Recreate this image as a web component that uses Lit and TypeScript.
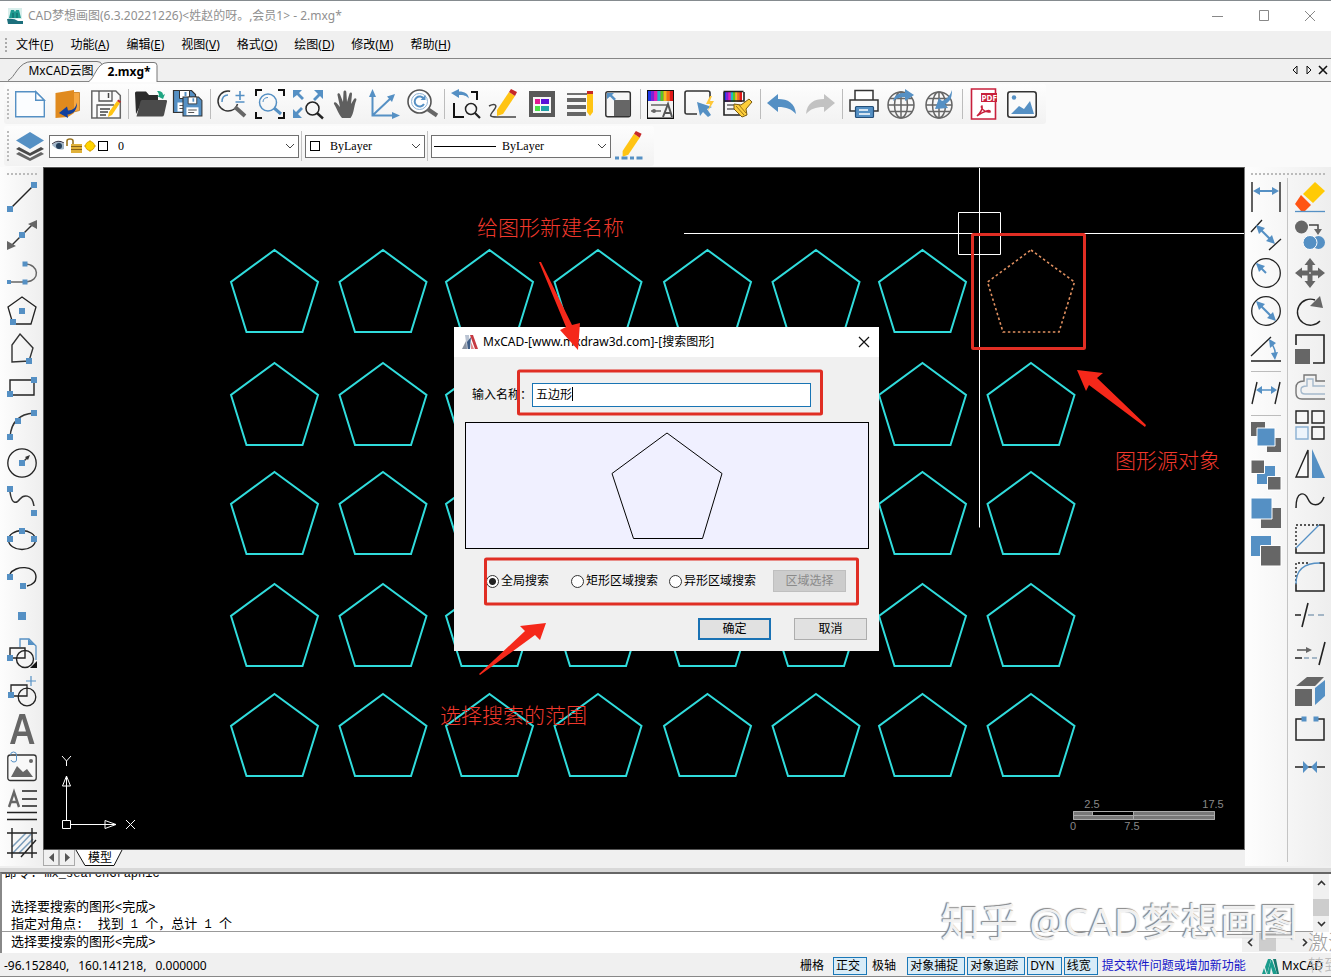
import { LitElement, html, svg, css } from "lit";
import type { SVGTemplateResult, TemplateResult } from "lit";
import { customElement, property } from "lit/decorators.js";

const B = "#5590c4";
const G = "#666666";

const node = (x: number, y: number, s = 6) =>
  svg`<rect x=${x - s / 2} y=${y - s / 2} width=${s} height=${s} fill=${B} />`;

const pencil = svg`<path d="M8 21 20 3l6 4L14 25l-6 2z" fill="#ffc414"/><path d="M20 3l2-3 6 3-2 4z" fill="#c62828"/>`;
const rainbow = (x: number, y: number, w: number) => svg`
  <rect x=${x} y=${y} width=${w} height="10" fill="#d11fc0"/>
  ${["#2038e8", "#7a22d8", "#e020b8", "#20b8c8", "#58c820", "#f0c018", "#f07010", "#e01818"].map(
    (c, i) => svg`<rect x=${x + (i * w) / 8} y=${y} width=${w / 8} height="10" fill=${c} />`
  )}`;
const globe = svg`<g fill="none" stroke="#666" stroke-width="1.500"><circle cx="14" cy="16" r="13"/><ellipse cx="14" cy="16" rx="6.500" ry="13"/><path d="M14 3v26M1 16h26M3 9.500h22M3 22.500h22"/></g>`;
const floppy = (x: number, y: number, s: number) => svg`
  <g transform="translate(${x} ${y}) scale(${s})">
    <path d="M0 0h18l4 4v18H0z" fill=${B} stroke="#333" stroke-width="1.200"/>
    <path d="M6 0h10v8H6z" fill="#fff" stroke="#333"/><path d="M12 1.500v4" stroke=${B} stroke-width="2"/>
    <path d="M4 12h14v9H4z" fill="#fff"/><path d="M6 15h10M6 18h7" stroke="#555" stroke-width="1.200"/>
  </g>`;

const ICONS: Record<string, SVGTemplateResult> = {
  newFile: svg`<path d="M.7 2.700h20l8.600 8.600v16.500H.7z" fill="#fbfdff" stroke=${B} stroke-width="1.400"/><path d="M20.700 2.700v8.600h8.600z" fill="#fff" stroke=${B} stroke-width="1.400"/>`,
  door: svg`<path d="M17 3.500h9.500v18L17 24z" fill="#f6a843" stroke="#c47a1c" stroke-width=".8"/><path d="M2.500 4 21 1v23l-6 4-12.500 1z" fill="#e08a1e"/><path d="M24 13.500c-1 5-4 8-9 8l-1-4-8 6.500 9 5-.5-3.500c6 0 10-5 9.500-12z" fill="#123f9c"/>`,
  save: svg`<path d="M.8 2h24l4.500 4.500V29H.8z" fill="#fbfbfb" stroke="#666" stroke-width="1.500"/><path d="M8 2v10h13V2M6 29V16h17" fill="none" stroke="#555" stroke-width="1.300"/><path d="M17.500 4v5" stroke="#444" stroke-width="1.500"/><path d="M9 20h10M9 23h8M9 26h6" stroke="#444" stroke-width="1.300"/><path d="m18 23 8-11 3 2-8 12-4 2z" fill="#ffc414"/><path d="m26 12 1.500-1.500 2.500 2L29 14z" fill="#c62828"/>`,
  open: svg`<path d="M0 4q0-1.500 1.500-1.500H11L14 6h9v5H8L1 25z" fill="#2b2b2b"/><path d="M7 11h24q1.500 0 1 1.500L29 26q-.5 1.500-2 1.500H1.500L5.500 12.500Q6 11 7 11z" fill="#4b4b4b"/><path d="M22 2c5 0 6 2 6 4l2-1-2 5-6-3 2-.5c0-2-1-3-2-4.500z" fill="#1fa582"/>`,
  saveAll: svg`${floppy(0.5, 1.5, 1)}${floppy(10, 8, 0.86)}`,
  zoomPm: svg`<circle cx="11" cy="12" r="10" fill="none" stroke="#333" stroke-width="1.500" stroke-dasharray="46 17" stroke-dashoffset="-3"/><path d="M5 13c0-4 2-7 6-7" fill="none" stroke=${B} stroke-width="1.500"/><path d="M18 18 28 27" stroke=${G} stroke-width="4"/><path d="M23 2v9M18.500 6.500h9M18.500 13h9" stroke=${B} stroke-width="1.600"/>`,
  zoomWin: svg`<path d="M1 7V1h6M23 1h6v6M29 23v6h-6M7 29H1v-6" fill="none" stroke="#111" stroke-width="2"/><circle cx="13" cy="13.500" r="8.500" fill="none" stroke=${B} stroke-width="1.500"/><path d="M8 13c0-3 2-4.500 5-4.500" fill="none" stroke=${B}/><path d="m19 19 7 6" stroke=${B} stroke-width="3"/>`,
  zoomExt: svg`<path d="M0 1h9L6 4l5 5-2 2-5-5-4 3zM30 1v9l-3-3-5 5-2-2 5-5-4-4zM0 29v-9l3 3 5-5 2 2-5 5 4 4z" fill=${B}/><circle cx="19.500" cy="19.500" r="6.500" fill="none" stroke="#222" stroke-width="1.500"/><path d="m24 24 6 5.500" stroke="#222" stroke-width="2.400"/>`,
  hand: svg`<path d="M11 29C7 24 6 20 3 15c-.6-2 1.600-2.500 2.600-1L9 18 6.500 6c-.4-2 2-2.400 2.600-.6L12 13 12.500 3c.2-2 2.600-2 2.800 0L16 13l2.500-8.500c.6-1.700 2.800-1.200 2.500.6L20 15l3-5c1-1.700 3-.6 2.300 1.200C23 16 23 25 19.500 29z" fill="#5f5f5f"/>`,
  ucs: svg`<path d="M3.500 6v20.500H25M4 26 22 9" fill="none" stroke=${B} stroke-width="2"/><path d="M3.500 0 7 8H0zM31 26.500l-8 3.500v-7zM26 5l-3 8-5-5.500z" fill=${B}/>`,
  zoomPrev: svg`<circle cx="12.500" cy="12.500" r="11.500" fill="#fff" stroke="#555" stroke-width="1.600"/><circle cx="12.500" cy="12.500" r="8" fill="none" stroke="#8bb0d2" stroke-width="1"/><path d="M17 15a5 5 0 1 1 0-5" fill="none" stroke=${B} stroke-width="2"/><path d="M18.500 6v5h-5z" fill=${B}/><path d="m20.500 20 9.500 6.500" stroke=${G} stroke-width="4"/>`,
  undoWin: svg`<path d="M20 3h6v8M3 14v14h10" fill="none" stroke="#111" stroke-width="2"/><path d="M0 4 8 0v2.500c6 0 9 2 10 7-3-3-5-3.500-10-3.500V9z" fill=${B}/><circle cx="20" cy="20" r="5.500" fill="none" stroke="#222" stroke-width="1.500"/><path d="m24 24 5 5" stroke="#222" stroke-width="2.200"/>`,
  sketch: svg`<path d="M0 17c6-3 9-1 5 4s-6 7 3 7h19" fill="none" stroke="#444" stroke-width="1.500"/>${pencil}`,
  props: svg`<rect x="2" y="2" width="26" height="26" fill="#595959"/><rect x="6" y="8" width="18" height="16" fill="#f6f6f6"/><path fill="#e01890" d="M8 10h5v5H8z"/><path fill="#5a10d8" d="M14 10h8v5h-8z"/><path fill="#48e048" d="M8 17h5v5H8z"/><path fill="#20a0a8" d="M14 17h8v5h-8z"/>`,
  lines: svg`<path d="M2 5h20" stroke="#444" stroke-width="1.500"/><path d="M2 11h19M2 18h19M2 25h19" stroke=${G} stroke-width="4"/><path d="M22 5h6v18l-3 4-3-4z" fill="#ffc414"/><path d="M22 2h6v3h-6z" fill="#c62828"/>`,
  scale: svg`<rect x="2.800" y="2.800" width="24.500" height="25" rx="2" fill="#f6f6f6" stroke="#333" stroke-width="1.500"/><path d="M11 11h16v16H11z" fill=${G}/><path d="M4 4h7L9 6l4 4-2 1.500-4-4L4 10z" fill=${B}/>`,
  layerA: svg`<rect x="0" y="1" width="27" height="29" fill="#111"/>${rainbow(1, 2, 25)}<path d="M1 12h25v16.500H1z" fill="#f2f2f2"/><path d="M4 16h17M4 22h10" stroke=${G} stroke-width="1.600"/><circle cx="7" cy="22" r="2" fill=${G}/><path d="m16 28 5-13 4 13M18 24h5" fill="none" stroke="#555" stroke-width="2"/>`,
  quickSel: svg`<path d="M12 25H2q-2 0-2-2V4q0-2 2-2h21q2 0 2 2v5" fill="none" stroke="#333" stroke-width="1.600"/><path d="m12 13 15 5-5 2 4 6-3 2-5-5-3 4z" fill=${B}/><path d="m25 7-4 8h4l-2 7 6-10h-4l2-5z" fill="#ffc83a"/>`,
  match: svg`${rainbow(1, 3, 18)}<path d="M.5 2.500h20M1 3v23h17M1 12h20V3" fill="none" stroke="#222" stroke-width="1.600"/><path d="M4 16h9M4 20h8" stroke=${G} stroke-width="1.600"/><path d="m11 15 7 1 8-6 3 3-6 7 1 6-5 2-8-8z" fill="#ffcf3a" stroke="#7a5b10" stroke-width="1"/><path d="m13 17 8 9M16 16l7 8" stroke="#9a7318"/>`,
  undo: svg`<path d="M0 14 11 5v5c10 0 17 4 18 15-5-5-9-7-18-7v5z" fill=${B}/>`,
  redo: svg`<path d="M30 14 19 5v5C9 10 2 14 1 25c5-5 9-7 18-7v5z" fill="#c2c2c2"/>`,
  print: svg`<path d="M6 11V1.500h18V11" fill="#fff" stroke="#333" stroke-width="1.500"/><path d="M6 22H1V11h28v11h-5" fill="#f8f8f8" stroke="#333" stroke-width="1.500"/><rect x="6.500" y="17.500" width="18" height="11" rx="1" fill=${B} stroke="#234e78" stroke-width="1.200"/><path d="M10 21h9M10 25h11" stroke="#fff" stroke-width="1.300"/>`,
  globeUp: svg`${globe}<path d="M6 12c2-7 6-8 12-8V0l9 6-9 6V8c-5 0-8 1-12 4z" fill=${B}/>`,
  globeDown: svg`${globe}<path d="M27 1c0 8-2 12-7 14l3 4-13 1 4-11 3 3c5-2 8-5 10-11z" fill=${B}/>`,
  pdf: svg`<path d="M2.500 0h24v30h-24z" fill="#fff" stroke="#c8203c" stroke-width="1.600"/><path d="M12 4h16v9H12z" fill="#c8203c"/><text x="12.500" y="12" font-family="Open Sans, Liberation Sans, sans-serif" font-size="8" font-weight="700" fill="#fff">PDF</text><path d="M8 27c3-3 6-7 5-10-2 0 1 7 8 6 1-3-6-1-13 4z" fill="none" stroke="#c8203c" stroke-width="1.500"/>`,
  image: svg`<rect x=".8" y="2.800" width="28.400" height="25.500" rx="2.500" fill="#fafafa" stroke="#333" stroke-width="1.600"/><circle cx="7" cy="8.500" r="2.200" fill=${B}/><path d="m4 25 8-8 5 3 6-8 4 13z" fill=${B}/>`,
  layers: svg`<path d="m1 23 3-2 11 6 11-6 3 2-14 7z" fill=${G}/><path d="m1 18 3-2 11 6 11-6 3 2-14 7z" fill="#4a4a4a"/><path d="M15 1 29 9.500 15 18 1 9.500z" fill=${B}/>`,
  linetype: svg`<g transform="scale(.95)">${pencil}</g><path d="M0 27h30" stroke=${B} stroke-width="3" stroke-dasharray="4 2.500 6 2.500"/>`,

  line: svg`<path d="M3 27 27 3" stroke="#222" stroke-width="1.400"/>${node(3, 27)}${node(27, 3)}`,
  xline: svg`<path d="M3 27 27 3" stroke="#333" stroke-width="1.500"/><path d="M30 0v9l-9-5zM0 30v-9l9 5z" fill=${G}/>${node(15, 15)}`,
  pline: svg`<path d="M2 24h17c15-1 13-18-1-18" fill="none" stroke="#666" stroke-width="1.500"/>${node(2, 24, 4)}${node(18, 24, 5)}${node(18, 6, 5)}`,
  polygon: svg`<path d="m15 1 14 10-5 17H6L1 11z" fill="none" stroke="#222" stroke-width="1.300"/>${node(15, 15)}${node(6, 26)}`,
  polygon2: svg`<path d="m13 0 13 14-4 13-17 1V11z" fill="none" stroke="#333" stroke-width="1.400"/>${node(22, 27)}`,
  rect: svg`<path d="M3 8h24v15H3z" fill="none" stroke="#222" stroke-width="1.400"/>${node(27, 8)}${node(3, 22)}`,
  arc: svg`<path d="M3 27C4 14 11 4 27 3" fill="none" stroke="#333" stroke-width="1.500"/>${node(27, 3)}${node(11, 11)}${node(3, 27)}`,
  circle: svg`<circle cx="15" cy="15" r="14.200" fill="none" stroke="#222" stroke-width="1.300"/><path d="m15 15 6-6" stroke="#333" stroke-width="1.500"/><path d="m23 7-2 5-3-3z" fill="#333"/>${node(15, 15)}`,
  spline: svg`<path d="M3 6c2 14 7 11 10 7s12-6 14 7" fill="none" stroke="#333" stroke-width="1.500"/>${node(3, 3)}${node(27, 27)}`,
  ellipse: svg`<ellipse cx="15" cy="16" rx="13.500" ry="9.500" fill="none" stroke="#222" stroke-width="1.300"/>${node(15, 7)}${node(3, 15)}${node(27, 15)}`,
  ellArc: svg`<path d="M3 12C8 3 29 3 29 15c0 5-4 8-9 9" fill="none" stroke="#222" stroke-width="1.400"/>${node(3, 15)}${node(16, 24)}`,
  point: svg`${node(15, 16, 8)}`,
  insert: svg`<path d="M13 9V1h9l7 7v14" fill="none" stroke=${B} stroke-width="1.300"/><path d="M21 1v6h7z" fill=${B}/><path d="M3 10h15v10H3z" fill="none" stroke="#222" stroke-width="1.400"/><circle cx="18" cy="21" r="8.500" fill="none" stroke="#222" stroke-width="1.400"/>${node(3, 20)}<path d="M30 23v7h-7z" fill="#111"/>`,
  block: svg`<path d="M4 9h16v11H4z" fill="none" stroke="#222" stroke-width="1.300"/><circle cx="20" cy="21" r="8.800" fill="none" stroke="#222" stroke-width="1.300"/>${node(4, 19)}<path d="M24 0v10M19 5h10" stroke=${B} stroke-width="1.200"/>`,
  textA: svg`<path d="M3 30 12.500 0h5.500l9.500 30h-5l-2.300-8H10.200l-2.300 8zM11.400 17.500h7.600L15.200 5z" fill=${G}/>`,
  picture: svg`<rect x=".8" y="3" width="28.400" height="25.500" rx="2.500" fill="#f8f8f8" stroke="#333" stroke-width="1.300"/><circle cx="24" cy="9" r="2" fill=${G}/><path d="m4 25 6-11 6 6 4-3 6 8z" fill=${G}/><path d="M3.500 3q0-3 3-3t3 3v5q0 2-2.500 2T4 8" fill="none" stroke=${B}/>`,
  mtext: svg`<path d="M2 17 7 2l5 15M4 12h7" fill="none" stroke=${G} stroke-width="2.400"/><path d="M15 1h15M15 9h15M15 16h15M0 22.500h30M0 29.500h30" stroke="#222" stroke-width="1.400"/>`,
  hatch: svg`<path d="m5 19 14-14M6 25 24 6M12 25 26 11" stroke="#7a9cba" stroke-width="1.500"/><path d="M5 0v30M25 0v30M0 5h30M0 25h30M14 29 29 12" stroke="#222" stroke-width="1.400"/>`,

  dimH: svg`<path d="M1 0v30M29 0v30" stroke="#222" stroke-width="1.400"/><path d="M5 9h20" stroke=${B} stroke-width="2"/><path d="m2 9 7-4v8zM28 9l-7-4v8z" fill=${B}/>`,
  dimA: svg`<path d="M0 12 11 0M18 30l12-11" stroke="#222" stroke-width="1.300"/><path d="m7 7 15 15" stroke=${B} stroke-width="2"/><path d="m5 5 9 3-6 6zM24 24l-9-3 6-6z" fill=${B}/>`,
  dimR: svg`<circle cx="15" cy="15" r="14.300" fill="none" stroke="#222" stroke-width="1.300"/><path d="m6 6 9 9" stroke=${B} stroke-width="2"/><path d="m5 5 9 3-6 6z" fill=${B}/>`,
  dimD: svg`<circle cx="15" cy="15" r="14.300" fill="none" stroke="#222" stroke-width="1.300"/><path d="m7 7 16 16" stroke=${B} stroke-width="2"/><path d="m5 5 9 3-6 6zM25 25l-9-3 6-6z" fill=${B}/>`,
  dimAng: svg`<path d="M0 22 20 3M0 27h30" stroke="#222" stroke-width="1.300"/><path d="M20 9c4 5 5 9 4 14" fill="none" stroke=${B} stroke-width="1.500"/><path d="m18 5 7 4-6 5zM24 26l-4-7 7-1z" fill=${B}/>`,
  dimEdit: svg`<path d="M1 26 6 4M24 26l5-22" stroke="#222" stroke-width="1.400"/><path d="M7 12h17" stroke=${B} stroke-width="1.500"/><path d="m5 12 6-4v8zM26 12l-6-4v8z" fill=${B}/>`,
  ord1: svg`<path d="M0 0h14v14H0zM16 16h14v14H16z" fill="#666"/><path d="M6 6h18v18H6z" fill=${B} stroke="#fff"/>`,
  ord2: svg`<path d="M6 6h18v18H6z" fill=${B}/><path d="M0 0h13.500v13.500H0zM16.500 16.500H30V30H16.500z" fill="#666" stroke="#fff"/>`,
  ord3: svg`<path d="M10 10h20v20H10z" fill="#666"/><path d="M0 0h21v21H0z" fill=${B} stroke="#fff"/>`,
  ord4: svg`<path d="M0 0h20v20H0z" fill=${B}/><path d="M9.500 9.500H30V30H9.500z" fill="#666" stroke="#fff"/>`,
  erase: svg`<path d="M20 0 30 9 18 21 8 12z" fill="#ffca05"/><path d="m6 13 10 10-6 6H6l-6-7z" fill="#ff5414"/><path d="M0 29.500h30" stroke=${B} stroke-width="1.300"/>`,
  copy: svg`<circle cx="6.500" cy="7" r="6.500" fill=${G}/><path d="M14 5h9v6" fill="none" stroke="#444" stroke-width="1.500"/><path d="M19 9h8l-4 6z" fill=${G}/><circle cx="23.500" cy="22.500" r="6.500" fill=${B}/><circle cx="15" cy="22.500" r="7" fill=${B} stroke="#fff"/>`,
  move: svg`<path d="m15 0 5.500 7H17.500v5.500H23v-3l7 5.500-7 5.500v-3h-5.500V23h3L15 30l-5.500-7h3v-5.500H7v3L0 15l7-5.500v3h5.500V7h-3z" fill=${G}/><path d="M14 14h2v2h-2z" fill="#bbb"/>`,
  rotate: svg`<path d="M20 4A13 13 0 1 0 25 25" fill="none" stroke="#222" stroke-width="1.400"/><path d="m25 0 3 12-13-2z" fill=${G}/>`,
  scaleR: svg`<path d="M1 11V1h28v28h-11" fill="none" stroke="#222" stroke-width="1.600"/><path d="M0 15h15v15H0z" fill=${G}/>`,
  offset: svg`<path d="M30 9H21V3H9v6Q1 9 1 16v5q0 6 6 6h23" fill="none" stroke="#777" stroke-width="1.400"/><path d="M30 14H18V7h-6v7q-6 0-6 3.500v1q0 3.500 4 3.500h20" fill="none" stroke="#a5b9cc" stroke-width="1.400"/>`,
  array: svg`<path d="M1 1h12v12H1zM17 1h12v12H17zM17 17h12v12H17z" fill="#f6f6f6" stroke="#222" stroke-width="1.400"/><path d="M1 17h12v12H1z" fill="#edf4fb" stroke="#8ab0d2" stroke-width="1.400"/>`,
  mirror: svg`<path d="M13 2v27H1z" fill="#fafafa" stroke="#222" stroke-width="1.400"/><path d="M17 1v29h13z" fill=${B}/>`,
  wave: svg`<path d="M1 22C1 4 10 6 13 13s12 9 16-2" fill="none" stroke="#222" stroke-width="1.500"/>`,
  chamfer: svg`<path d="M24 1h5v28H1v-4" fill="none" stroke="#222" stroke-width="1.600"/><path d="M1 25V1h24" fill="none" stroke="#222" stroke-width="1.400" stroke-dasharray="2 2"/><path d="M1 24 24 1" stroke=${B} stroke-width="1.300"/>`,
  fillet: svg`<path d="M24 1h5v28H1v-6" fill="none" stroke="#222" stroke-width="1.600"/><path d="M1 23V1h14" fill="none" stroke="#222" stroke-width="1.400" stroke-dasharray="2 2"/><path d="M1 22C1 8 9 1 25 1" fill="none" stroke=${B} stroke-width="1.300"/>`,
  trim: svg`<path d="M0 15h6M7 27l6-24" stroke="#222" stroke-width="1.600"/><path d="M13 15h17" stroke="#8aa2b8" stroke-width="1.500" stroke-dasharray="6 4"/>`,
  extend: svg`<path d="M0 20h7M24 27l6-23" stroke="#222" stroke-width="1.600"/><path d="M9 20h13" stroke="#8aa2b8" stroke-width="1.500" stroke-dasharray="5 3"/><path d="M2 12h10" stroke="#555" stroke-width="1.500"/><path d="M11 9v6l6-3z" fill=${G}/>`,
  cube: svg`<path d="M0 13h17v17H0zM1 10 12 1h17l-9 9z" fill=${G}/><path d="m20 12 10-8v16L20 29z" fill=${B}/>`,
  brk: svg`<path d="M8 5H1v21h28V5h-8" fill="none" stroke="#222" stroke-width="1.500"/>${node(9, 5, 5)}${node(21, 5, 5)}`,
  join: svg`<path d="M0 15h30" stroke="#222" stroke-width="1.500"/><path d="M8 9v12l6-6zM22 9v12l-6-6z" fill=${B}/>`,
};

type Item = [string, string] | "|";

const MAIN: Item[] = [
  ["newFile", "新建"], ["door", "打开"], ["save", "保存"], "|",
  ["open", "打开文件"], ["saveAll", "另存为"], "|",
  ["zoomPm", "缩放"], ["zoomWin", "窗口缩放"], ["zoomExt", "范围缩放"], ["hand", "平移"], ["ucs", "坐标系"], ["zoomPrev", "重生成"], "|",
  ["undoWin", "上一视图"], ["sketch", "徒手画"], ["props", "特性"], ["lines", "线宽"], ["scale", "比例"], "|",
  ["layerA", "文字样式"], ["quickSel", "快速选择"], ["match", "特性匹配"], "|",
  ["undo", "撤销"], ["redo", "重做"], "|",
  ["print", "打印"], ["globeUp", "上传"], ["globeDown", "下载"], "|",
  ["pdf", "输出 PDF"], ["image", "输出图片"],
];
const DRAW: Item[] = [
  ["line", "直线"], ["xline", "构造线"], ["pline", "多段线"], ["polygon", "正多边形"], ["polygon2", "多边形"], ["rect", "矩形"],
  ["arc", "圆弧"], ["circle", "圆"], ["spline", "样条曲线"], ["ellipse", "椭圆"], ["ellArc", "椭圆弧"], ["point", "点"],
  ["insert", "插入块"], ["block", "创建块"], ["textA", "文字"], ["picture", "图片"], ["mtext", "多行文字"], ["hatch", "填充"],
];
const DIMS: Item[] = [
  ["dimH", "线性标注"], ["dimA", "对齐标注"], ["dimR", "半径标注"], ["dimD", "直径标注"], ["dimAng", "角度标注"], "|",
  ["dimEdit", "编辑标注"], "|", ["ord1", "前置"], ["ord2", "后置"], ["ord3", "置于对象之上"], ["ord4", "置于对象之下"],
];
const EDIT: Item[] = [
  ["erase", "删除"], ["copy", "复制"], ["move", "移动"], ["rotate", "旋转"], ["scaleR", "缩放"], ["offset", "偏移"],
  ["array", "阵列"], ["mirror", "镜像"], ["wave", "样条编辑"], ["chamfer", "倒角"], ["fillet", "圆角"], ["trim", "修剪"],
  ["extend", "延伸"], ["cube", "分解"], ["brk", "打断"], ["join", "合并"],
];

const icon = (name: string) => html`<svg class="icon" viewBox="0 0 30 30" aria-hidden="true">${ICONS[name]}</svg>`;

const base = css`
  * { box-sizing: border-box; }
  button, input, select { font: inherit; color: inherit; margin: 0; }
  button { border: 0; background: none; padding: 0; }
  .icon { display: block; width: 30px; height: 30px; overflow: visible; }
`;

@customElement("tool-strip")
class ToolStrip extends LitElement {
  @property({ attribute: false }) items: Item[] = [];
  static styles = [base, css`
    :host { display: flex; flex-direction: var(--dir, column); }
    .tool { width: 38px; height: 38px; display: grid; place-items: center; flex: none; }
    .sep { flex: none; display: grid; place-items: center; }
    .sep::before { content: ""; background: #bcbcbc; }
    :host([row]) { --dir: row; }
    :host([row]) .sep { width: 6px; }
    :host([row]) .sep::before { width: 1px; height: 30px; }
    :host(:not([row])) .sep { height: 6px; }
    :host(:not([row])) .sep::before { width: 30px; height: 1px; }
  `];
  render() {
    return this.items.map((it) =>
      it === "|" ? html`<span class="sep"></span>`
        : html`<button class="tool" aria-label=${it[1]}>${icon(it[0])}</button>`);
  }
}

@customElement("search-dialog")
class SearchDialog extends LitElement {
  static styles = [base, css`
    :host { display: flex; flex-direction: column; background: #f0f0f0; color: #000; font-size: 12px; line-height: 18px; }
    .head { display: flex; align-items: center; gap: 5px; height: 30px; padding: 0 8px; background: #fff; }
    .head h2 { flex: 1; margin: 0; font-size: 12px; font-weight: 400; }
    .logo { width: 16px; height: 16px; }
    .close { width: 14px; height: 14px; }
    .close svg, .logo { display: block; }
    .body { display: flex; flex-direction: column; padding: 26px 10px 11px 11px; }
    .name { display: flex; align-items: center; padding-left: 7px; }
    .name label { width: 60px; white-space: nowrap; }
    .field { position: relative; }
    .name input { display: block; width: 279px; height: 24px; border: 1px solid #1874b4; background: #fff; padding: 0 3px 2px; outline: none; }
    .caret { position: absolute; left: 40px; top: 4px; width: 1px; height: 14px; background: #000; }
    .preview { margin-top: 15px; height: 127px; border: 1px solid #000; background: #f0f0ff; display: grid; place-items: center; }
    .scope { display: flex; align-items: center; margin: 21px 0 0; padding: 0 0 0 21px; border: 0; height: 22px; min-width: 0; }
    .scope label { display: flex; align-items: center; gap: 2px; white-space: nowrap; }
    .scope .first { width: 85px; }
    .scope .mid { width: 98px; }
    .scope .last { width: 104px; }
    input[type="radio"] { appearance: none; width: 13px; height: 13px; border: 1px solid #333; border-radius: 50%; background: #fff; flex: none; }
    input[type="radio"]:checked { background: radial-gradient(circle, #222 0 3px, #fff 4px); }
    .btn { width: 73px; height: 22px; border: 1px solid #adadad; background: #e1e1e1; line-height: 18px; }
    .btn.default { border: 2px solid #1a72b4; line-height: 16px; }
    .btn:disabled { background: #ccc; border-color: #bfbfbf; color: #8a8a8a; }
    .actions { display: flex; justify-content: flex-end; gap: 23px; margin-top: 26px; padding-right: 2px; }
  `];
  render() {
    return html`
      <div class="head">
        <svg class="logo" viewBox="0 0 16 16" aria-hidden="true"><path d="M0 15 4 7l2 8z" fill="#8a93a2"/><path d="M3 1h4l1 14H5z" fill="#b9c3d2"/><path d="M8 1h3l5 14h-3z" fill="#c63a42"/><path d="m5 8 4-5-1 12H6z" fill="#3d5c86"/><path d="m9 8 3 7H9z" fill="#e08a8c"/></svg>
        <h2>MxCAD-[www.mxdraw3d.com]-[搜索图形]</h2>
        <button class="close" aria-label="关闭"><svg viewBox="0 0 14 14"><path d="m2 2 10 10M12 2 2 12" stroke="#111" stroke-width="1.200"/></svg></button>
      </div>
      <div class="body">
        <div class="name"><label for="n">输入名称：</label><div class="field"><input id="n" type="text" value="五边形" /><span class="caret"></span></div></div>
        <div class="preview">
          <svg width="112" height="108" viewBox="0 0 112 108" role="img" aria-label="五边形"><path d="M56 1 111 41.500 91.500 106.500H22.500L1 41.500z" fill="none" stroke="#000"/></svg>
        </div>
        <fieldset class="scope" aria-label="搜索范围">
          <label class="first"><input type="radio" name="s" checked />全局搜索</label>
          <label class="mid"><input type="radio" name="s" />矩形区域搜索</label>
          <label class="last"><input type="radio" name="s" />异形区域搜索</label>
          <button class="btn" disabled>区域选择</button>
        </fieldset>
        <div class="actions"><button class="btn default">确定</button><button class="btn">取消</button></div>
      </div>`;
  }
}

const COLS = [274.5, 383, 489.5, 598, 707.5, 816, 922.5, 1031];
const ROWS = [250, 363, 472, 584, 694];
const penta = (x: number, y: number) =>
  `M${x} ${y}L${x + 43.5} ${y + 32}L${x + 28} ${y + 82}H${x - 28}L${x - 43.5} ${y + 32}Z`;

const MENUS = [["文件", "F"], ["功能", "A"], ["编辑", "E"], ["视图", "V"], ["格式", "O"], ["绘图", "D"], ["修改", "M"], ["帮助", "H"]];

const mixed = (s: string): TemplateResult[] =>
  s.split(/([\x20-\x7e]+)/).map((p) => (/^[\x20-\x7e]+$/.test(p) ? html`<span class="mono">${p}</span>` : html`${p}`));

@customElement("app-root")
class AppRoot extends LitElement {
  static styles = [base, css`
    :host {
      display: flex; flex-direction: column; min-height: 100vh; position: relative; overflow: hidden;
      background: #f0f0f0; color: #000; font-family: "Noto Sans", "Noto Sans CJK SC", sans-serif; font-size: 12px; line-height: 18px;
    }
    .title { display: flex; align-items: center; gap: 5px; height: 31px; padding: 0 13px 0 7px; background: #fff; border-top: 1px solid #858b8f; color: #909090; }
    .title h1 { flex: 1; margin: 0; font-size: 12px; font-weight: 400; }
    .title .app { width: 16px; height: 16px; }
    .wins { display: flex; gap: 30px; }
    .wins button { width: 16px; height: 16px; }
    .wins svg { display: block; fill: none; stroke: #888; }
    .menu { display: flex; align-items: center; gap: 17px; height: 28px; padding-left: 5px; border-bottom: 1px solid #868686; }
    .grip { flex: none; width: 2px; height: 14px; background: repeating-linear-gradient(#aaa 0 2px, transparent 2px 4px); margin-right: -8px; }
    .tabs { display: flex; height: 23px; position: relative; border-bottom: 1px solid #868686; align-items: flex-end; padding-left: 8px; }
    .tab { position: relative; height: 20px; width: 91px; padding-left: 15px; }
    .tab.on { width: 70px; margin: 0 0 -1px -11px; padding-left: 12px; font-weight: 700; }
    .tab svg { position: absolute; left: 0; top: 0; z-index: 0; }
    .tab span { position: relative; }
    .nav { margin-left: auto; display: flex; gap: 4px; padding: 0 3px 6px; }
    .nav button { width: 10px; height: 10px; }
    .nav svg { display: block; }
    .bars { background: #fafafa; height: 85px; padding: 2px 0 0 4px; display: flex; flex-direction: column; gap: 2px; align-items: flex-start; }
    .bar { display: flex; align-items: center; height: 40px; padding: 0 5px 0 3px; background: linear-gradient(#fdfdfd, #f2f2f2); border-radius: 3px; }
    .vgrip { width: 2px; height: 30px; margin-right: 2px; background: repeating-linear-gradient(#bbb 0 2px, transparent 2px 4px); }
    .lay { width: 38px; height: 34px; display: grid; place-items: center; }
    .combo { display: flex; align-items: center; position: relative; height: 23px; border: 1px solid #707070; background: #fff; padding-left: 4px; gap: 2px; font-family: "Liberation Serif", serif; }
    .combo select { appearance: none; border: 0; background: none; flex: 1; min-width: 0; height: 20px; padding: 0 20px 0 8px; outline: none; }
    .combo .chev { position: absolute; right: 3px; top: 7px; width: 10px; height: 7px; pointer-events: none; }
    .w1 { width: 250px; } .w2 { width: 120px; } .w3 { width: 180px; }
    .w1, .w3 { padding-left: 2px; }
    .w3 select { padding-left: 4px; }
    .box { width: 10px; height: 10px; border: 1px solid #000; background: #fff; }
    .dash { width: 62px; height: 1px; background: #000; }
    .gap { width: 1px; height: 30px; background: #c4c4c4; margin: 0 3px 0 2px; }
    .combo svg { flex: none; }
    .main { display: flex; flex: 1; min-height: 0; }
    .side { flex: none; background: linear-gradient(90deg, #fdfdfd, #eee); }
    .left { width: 43px; padding: 6px 0 0 3px; }
    .right { width: 86px; padding: 6px 2px 0; display: flex; flex-wrap: wrap; align-content: flex-start; }
    .hgrip { height: 2px; width: 30px; margin: 0 4px 3px; background: repeating-linear-gradient(90deg, #bbb 0 2px, transparent 2px 4px); }
    .right .hgrip { width: 74px; }
    .right .div { border-right: 1px solid #c4c4c4; padding-right: 2px; margin-right: 3px; height: 684px; }
    .center { flex: 1; min-width: 0; display: flex; flex-direction: column; }
    .canvas { flex: 1; position: relative; background: #000; overflow: hidden; border: 1px solid #555; border-right: 1px solid #777; }
    .layer { position: absolute; left: 0; top: 0; width: 100%; height: 100%; pointer-events: none; }
    search-dialog { position: absolute; left: 410px; top: 159px; width: 425px; }
    .model { display: flex; height: 16px; }
    .model button { width: 16px; height: 16px; border: 1px solid #aaa; border-top: 0; display: grid; place-items: center; }
    .model .sheet { width: 50px; border: 0; position: relative; line-height: 16px; }
    .sheet svg { position: absolute; left: 0; top: 0; }
    .sheet span { position: relative; }
    .cmd { margin-top: 6px; height: 81px; background: #fff; box-shadow: 0 -4px #d8d8d8; border-top: 2px solid #666; border-left: 2px solid #888; display: grid; grid-template-columns: 1fr 18px; grid-template-rows: 58px 21px; font-family: "Noto Sans CJK SC", sans-serif; font-size: 13px; line-height: 17px; position: relative; }
    .log { overflow: hidden; display: flex; flex-direction: column; justify-content: flex-end; border-bottom: 1px solid #999; }
    .log p, .entry p { margin: 0; padding-left: 9px; white-space: pre; flex: none; height: 17px; }
    .log .cut { padding-left: 2px; }
    .entry { display: flex; justify-content: space-between; overflow: hidden; }
    .mono { font-family: "Liberation Mono", monospace; font-size: 12px; }
    .vs { background: #f0f0f0; width: 16px; display: flex; flex-direction: column; align-items: center; justify-content: space-between; padding: 5px 0 4px; }
    .hs { background: #f0f0f0; width: 71px; height: 20px; display: flex; align-items: center; padding: 0 4px; }
    .hs i { width: 17px; height: 18px; background: #cdcdcd; margin: 0 auto 0 4px; }
    .vs i { width: 16px; height: 17px; background: #cdcdcd; margin-top: 8px; }
    .status { display: flex; align-items: center; height: 24px; padding: 3px 8px 0 4px; border-bottom: 1px solid #888; }
    .pos { margin-right: auto; display: flex; gap: 9px; }
    .status button { height: 18px; line-height: 16px; padding: 0 6px 0 2px; margin: 0 1px; border: 1px solid transparent; white-space: nowrap; }
    .status .on { border-color: #1a78b8; background: #d8ecf8; }
    .status .gapr { margin-right: 3px; }
    .status a { color: #1414c8; text-decoration: none; margin: 0 16px 0 3px; }
    .brand { display: flex; align-items: center; gap: 3px; }
    .mark { position: absolute; left: 941px; bottom: 30px; font-family: "Noto Sans", "Noto Sans CJK SC", sans-serif; font-size: 39px; line-height: 52px; color: rgba(255, 255, 255, 0.9); text-shadow: -1px -1px 1px #888, -1px 0 1px #999; white-space: pre; pointer-events: none; }
    .act { position: absolute; left: 1308px; bottom: 22px; font-size: 20px; line-height: 24px; color: #a0a0a0; font-weight: 300; white-space: nowrap; pointer-events: none; }
    .act.two { bottom: 2px; font-size: 16px; line-height: 20px; color: #b4b4b4; }
  `];

  private chevron = html`<svg class="chev" viewBox="0 0 10 7"><path d="m1 1 4 4 4-4" fill="none" stroke="#444"/></svg>`;

  private arrow(d: string) {
    return html`<svg width="9" height="9" viewBox="0 0 9 9" aria-hidden="true"><path d=${d} fill="none" stroke="#333" stroke-width="1.600"/></svg>`;
  }

  private drawing() {
    return html`<svg class="layer" role="img" aria-label="图纸"><g transform="translate(-44 -168)" fill="none" stroke-width="2">
      ${ROWS.map((y, r) => COLS.map((x, c) => r === 0 && c === 7
        ? svg`<path d=${penta(x, y)} stroke="#e09060" stroke-width="1.600" stroke-dasharray="2.500 2.500"/>`
        : svg`<path d=${penta(x, y)} stroke="#30dcdc"/>`))}
      <g stroke="#fff" stroke-width="1">
        <path d="M684 233.500h561M979.500 168v359.500M958.500 212.500h42v42h-42z"/>
        <path d="M62.500 820.500h8v8h-8zM66.500 820V776l-4 10h8l-4-10M71 824.500h45l-11-4v8l11-4M62 756l4.500 5 4.500-5M66.500 761v5M126 820l9 9M135 820l-9 9"/>
      </g>
      <path d="M1073 811h19v4h41v-4h82v9h-142z" fill="#777"/>
      <path d="M1073.500 811.500h141v8h-141zM1073 815.500h142M1092.500 811v4M1133.500 811v9" stroke="#aaa" stroke-width="1"/>
      <path d="M1093 812h40v3h-40z" fill="#000"/>
      <g fill="#888" font-family="Liberation Sans, sans-serif" font-size="11" text-anchor="middle">
        <text x="1092" y="808">2.5</text><text x="1213" y="808">17.5</text><text x="1073" y="830">0</text><text x="1132" y="830">7.5</text>
      </g>
    </g></svg>`;
  }

  private notes() {
    return html`<svg class="layer"><g transform="translate(-44 -168)">
      <g fill="none" stroke="#e02e24" stroke-width="3"><rect x="972.500" y="234.500" width="112" height="114" rx="1"/><rect x="518.500" y="371" width="303" height="43" rx="1"/><rect x="485.500" y="559" width="372" height="45" rx="1"/></g>
      <g fill="#f5281a">
        <path d="m539 262 2 0 31 63 8-2-2 27-18-20 6-3z"/>
        <path d="m1146 425-1 2-56-42-3 6-9-21 26 3-6 5z"/>
        <path d="m479 674 1 1 55-40 5 5 6-17-26 3 5 5z"/>
      </g>
      <g fill="#f0382c" font-family="Noto Sans CJK SC, sans-serif" font-size="21" font-weight="300">
        <text x="477" y="235">给图形新建名称</text><text x="1115" y="468">图形源对象</text><text x="440" y="723">选择搜索的范围</text>
      </g>
    </g></svg>`;
  }

  render() {
    return html`
      <header class="title">
        <svg class="app" viewBox="0 0 16 16" aria-hidden="true"><path d="M1 0h14v11H1z" fill="#d9efec"/><path d="m2 10 2-8h3l1 2 1-2h3l2 8z" fill="#1d9a90"/><path d="M6 10V5M10 10V5" stroke="#0f5f62"/><path d="M0 11q7-1 11 2h5v3H1z" fill="#1c6f7c"/></svg>
        <h1>CAD梦想画图(6.3.20221226)&lt;姓赵的呀。,会员1&gt; - 2.mxg*</h1>
        <div class="wins">
          <button aria-label="最小化"><svg viewBox="0 0 16 16"><path d="M2 8.500h11"/></svg></button>
          <button aria-label="最大化"><svg viewBox="0 0 16 16"><path d="M3.500 2.500h9v10h-9z"/></svg></button>
          <button aria-label="关闭"><svg viewBox="0 0 16 16"><path d="m3 3 10 10M13 3 3 13"/></svg></button>
        </div>
      </header>
      <nav class="menu"><span class="grip"></span>${MENUS.map(([t, k]) => html`<button>${t}(<u>${k}</u>)</button>`)}</nav>
      <div class="tabs">
        <button class="tab"><svg width="96" height="20"><path d="M0 19.500C7 17 10 .5 24 .5h65q4 0 5 3" fill="#f0f0f0" stroke="#777"/></svg><span>MxCAD云图</span></button>
        <button class="tab on"><svg width="70" height="20"><path d="M0 20C7 17 8 .5 20 .5h46q3 0 3 3V20" fill="#fff" stroke="#777"/></svg><span>2.mxg*</span></button>
        <div class="nav">
          <button aria-label="上一页"><svg viewBox="0 0 10 10"><path d="M7 1 3 5l4 4z" fill="none" stroke="#111"/></svg></button>
          <button aria-label="下一页"><svg viewBox="0 0 10 10"><path d="m3 1 4 4-4 4z" fill="none" stroke="#111"/></svg></button>
          <button aria-label="关闭标签"><svg viewBox="0 0 10 10"><path d="m1 1 8 8M9 1 1 9" stroke="#111" stroke-width="1.600"/></svg></button>
        </div>
      </div>
      <div class="bars">
        <div class="bar"><span class="vgrip"></span><tool-strip row .items=${MAIN}></tool-strip></div>
        <div class="bar">
          <span class="vgrip"></span><button class="lay" aria-label="图层">${icon("layers")}</button>
          <div class="combo w1">
            <svg width="12" height="12" viewBox="0 0 12 12"><path d="M0 5q6-6 12-1v5q-6 2-12-4z" fill="#9fb4c8"/><circle cx="7" cy="6" r="3" fill="#26405c"/><path d="M0 4q6-5 12-1" fill="none" stroke="#334"/></svg>
            <svg width="16" height="16" viewBox="0 0 16 16"><path d="M1 8V3q0-2 3-2t3 2v5" fill="none" stroke="#9a7420" stroke-width="1.600"/><path d="M5 6h11v9H5z" fill="#e0b13a"/><path d="M5 8.500h11M5 11.500h11" stroke="#8a6418"/></svg>
            <svg width="12" height="12" viewBox="0 0 12 12"><circle cx="6" cy="6" r="4.500" fill="#ffd400" stroke="#e0a800"/><path d="M6 0v2M6 10v2M0 6h2M10 6h2" stroke="#e0a800"/></svg>
            <span class="box"></span><select aria-label="当前图层"><option>0</option></select>${this.chevron}
          </div>
          <span class="gap"></span>
          <div class="combo w2"><span class="box"></span><select aria-label="颜色"><option>ByLayer</option></select>${this.chevron}</div>
          <span class="gap"></span>
          <div class="combo w3"><span class="dash"></span><select aria-label="线型"><option>ByLayer</option></select>${this.chevron}</div>
          <button class="lay" aria-label="线型设置">${icon("linetype")}</button>
        </div>
      </div>
      <main class="main">
        <aside class="side left"><div class="hgrip"></div><tool-strip .items=${DRAW}></tool-strip></aside>
        <section class="center">
          <div class="canvas">${this.drawing()}<search-dialog role="dialog" aria-label="搜索图形"></search-dialog>${this.notes()}</div>
          <div class="model">
            <button aria-label="向左"><svg width="7" height="9"><path d="M6 0v9L1 4.500z" fill="#555"/></svg></button>
            <button aria-label="向右"><svg width="7" height="9"><path d="M1 0v9l5-4.500z" fill="#555"/></svg></button>
            <button class="sheet"><svg width="50" height="16"><path d="m1 0 9 15.500h29L47 0" fill="#fff" stroke="#111"/></svg><span>模型</span></button>
          </div>
        </section>
        <aside class="side right"><div class="hgrip"></div><tool-strip class="div" .items=${DIMS}></tool-strip><tool-strip .items=${EDIT}></tool-strip></aside>
      </main>
      <section class="cmd">
        <div class="log">
          <p class="cut">${mixed("命令: mx_searchGraphic")}</p><p> </p>
          <p>${mixed("选择要搜索的图形<完成>")}</p><p>${mixed("指定对角点:  找到 1 个，总计 1 个")}</p>
        </div>
        <div class="vs">${this.arrow("m1 6 3.500-3.500L8 6")}<i></i>${this.arrow("m1 3 3.500 3.500L8 3")}</div>
        <div class="entry"><p>${mixed("选择要搜索的图形<完成>")}</p><div class="hs">${this.arrow("M6 1 2.500 4.500 6 8")}<i></i>${this.arrow("m3 1 3.500 3.500L3 8")}</div></div>
      </section>
      <footer class="status">
        <span class="pos"><span>-96.152840,</span><span>160.141218,</span><span>0.000000</span></span>
        <button>栅格</button><button class="on">正交</button><button class="gapr">极轴</button><button class="on">对象捕捉</button><button class="on">对象追踪</button><button class="on">DYN</button><button class="on">线宽</button>
        <a href="#">提交软件问题或增加新功能</a>
        <span class="brand"><svg width="17" height="15" viewBox="0 0 17 15"><path d="m0 15 2-6 2 6zM3 8l3-8h3l-4 15z" fill="#1a9c8c"/><path d="m6 12 3-11h1l5 14h-4L9 8 8 15H5z" fill="#1a9c8c"/><path d="M11 0h3l3 15h-2z" fill="#16786e"/></svg>MxCAD</span>
      </footer>
      <div class="mark">知乎 @CAD梦想画图</div>
      <div class="act">激活</div><div class="act two">转到</div>`;
  }
}
